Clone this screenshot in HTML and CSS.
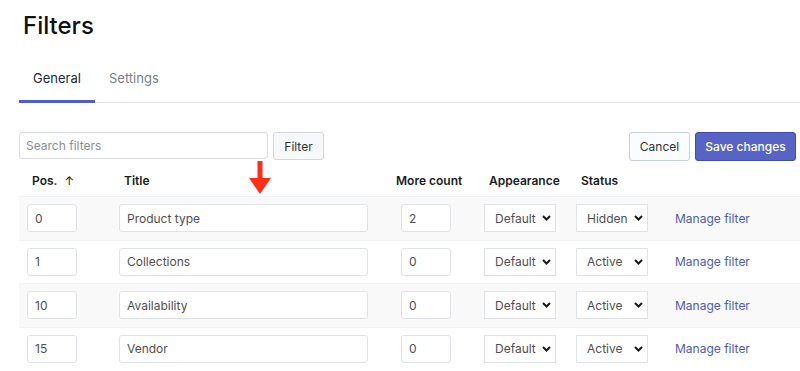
FILE: index.html
```html
<!DOCTYPE html>
<html lang="en">
<head>
    <meta charset="UTF-8">
    <meta name="viewport" content="width=device-width, initial-scale=1.0">
    <title>Filters</title>
    <link rel="stylesheet" href="styles.css">
</head>
<body>
    <div class="page">
        <h1>Filters</h1>

        <div class="tabs">
            <div class="tab active">General</div>
            <div class="tab">Settings</div>
        </div>

        <div class="toolbar">
            <div class="search">
                <input type="text" class="search-input" placeholder="Search filters">
                <button class="btn btn-filter">Filter</button>
            </div>
            <div class="actions">
                <button class="btn btn-cancel">Cancel</button>
                <button class="btn btn-primary">Save changes</button>
            </div>
        </div>

        <div class="table">
            <div class="head">
                <div class="th">Pos. <span class="sort">&uarr;</span></div>
                <div class="th">Title</div>
                <div class="th th-count">More count</div>
                <div class="th">Appearance</div>
                <div class="th">Status</div>
                <div></div>
                <!-- red pointer over the title column -->
                <svg class="pointer" width="22" height="34" viewBox="0 0 22 34">
                    <rect x="8.5" y="0" width="5" height="19" fill="#ff3014"/>
                    <polygon points="0,17 22,17 11,33" fill="#ff3014"/>
                </svg>
            </div>

            <div class="row">
                <input class="field pos" value="0">
                <input class="field title" value="Product type">
                <input class="field count" value="2">
                <div class="select-wrap"><select class="select"><option>Default</option></select><svg class="chev" width="9" height="6" viewBox="0 0 9 6"><path d="M1 1 L4.5 4.5 L8 1" fill="none" stroke="#1a1a1a" stroke-width="2"/></svg></div>
                <div class="select-wrap"><select class="select"><option>Hidden</option></select><svg class="chev" width="9" height="6" viewBox="0 0 9 6"><path d="M1 1 L4.5 4.5 L8 1" fill="none" stroke="#1a1a1a" stroke-width="2"/></svg></div>
                <a href="#" class="manage">Manage filter</a>
            </div>
            <div class="row">
                <input class="field pos" value="1">
                <input class="field title" value="Collections">
                <input class="field count" value="0">
                <div class="select-wrap"><select class="select"><option>Default</option></select><svg class="chev" width="9" height="6" viewBox="0 0 9 6"><path d="M1 1 L4.5 4.5 L8 1" fill="none" stroke="#1a1a1a" stroke-width="2"/></svg></div>
                <div class="select-wrap"><select class="select"><option>Active</option></select><svg class="chev" width="9" height="6" viewBox="0 0 9 6"><path d="M1 1 L4.5 4.5 L8 1" fill="none" stroke="#1a1a1a" stroke-width="2"/></svg></div>
                <a href="#" class="manage">Manage filter</a>
            </div>
            <div class="row">
                <input class="field pos" value="10">
                <input class="field title" value="Availability">
                <input class="field count" value="0">
                <div class="select-wrap"><select class="select"><option>Default</option></select><svg class="chev" width="9" height="6" viewBox="0 0 9 6"><path d="M1 1 L4.5 4.5 L8 1" fill="none" stroke="#1a1a1a" stroke-width="2"/></svg></div>
                <div class="select-wrap"><select class="select"><option>Active</option></select><svg class="chev" width="9" height="6" viewBox="0 0 9 6"><path d="M1 1 L4.5 4.5 L8 1" fill="none" stroke="#1a1a1a" stroke-width="2"/></svg></div>
                <a href="#" class="manage">Manage filter</a>
            </div>
            <div class="row">
                <input class="field pos" value="15">
                <input class="field title" value="Vendor">
                <input class="field count" value="0">
                <div class="select-wrap"><select class="select"><option>Default</option></select><svg class="chev" width="9" height="6" viewBox="0 0 9 6"><path d="M1 1 L4.5 4.5 L8 1" fill="none" stroke="#1a1a1a" stroke-width="2"/></svg></div>
                <div class="select-wrap"><select class="select"><option>Active</option></select><svg class="chev" width="9" height="6" viewBox="0 0 9 6"><path d="M1 1 L4.5 4.5 L8 1" fill="none" stroke="#1a1a1a" stroke-width="2"/></svg></div>
                <a href="#" class="manage">Manage filter</a>
            </div>
        </div>
    </div>
</body>
</html>
```

FILE: styles.css
```css
body {
    margin: 0;
    font-family: 'Inter', 'Liberation Sans', sans-serif;
    color: #212b36;
    background-color: #ffffff;
    overflow: hidden;
}
.page {
    padding-left: 19px;
}
h1 {
    margin: 10px 0 0 4px;
    font-size: 24px;
    line-height: 32px;
    font-weight: 500;
    color: #111;
}
.tabs {
    display: flex;
    margin-top: 26px;
    border-bottom: 1px solid #e3e5e8;
}
.tab {
    padding: 0 14px 12px 14px;
    font-size: 13px;
    line-height: 20px;
    color: #7a7f85;
    border-bottom: 3px solid transparent;
    margin-bottom: -1px;
}
.tab.active {
    color: #212b36;
    border-bottom-color: #4f5ecb;
    width: 48px;
}
.toolbar {
    display: flex;
    justify-content: space-between;
    align-items: flex-start;
    margin-top: 29px;
    padding-right: 4px;
}
.search {
    display: flex;
    gap: 5px;
}
.search-input {
    width: 249px;
    height: 27px;
    box-sizing: border-box;
    border: 1px solid #dadee3;
    border-radius: 3px;
    padding: 0 6px;
    font-family: inherit;
    font-size: 12px;
    color: #333;
}
.search-input::placeholder {
    color: #8a8f96;
}
.btn {
    height: 28px;
    padding: 0;
    border: 1px solid #d3d8de;
    border-radius: 3px;
    background-color: #f7f8fa;
    font-family: inherit;
    font-size: 12px;
    color: #333;
}
.btn-filter {
    width: 51px;
}
.actions {
    display: flex;
    gap: 5px;
}
.btn-cancel {
    height: 29px;
    width: 61px;
    background-color: #fbfcfd;
    border-color: #c9d0d8;
}
.btn-primary {
    height: 29px;
    width: 101px;
    background-color: #5764c6;
    border-color: #3f4db0;
    color: #ffffff;
    font-weight: 500;
}
.head, .row {
    display: grid;
    grid-template-columns: 92px 282px 83px 92px 99px 1fr;
    align-items: center;
    justify-items: start;
    padding-left: 8px;
}
.head {
    position: relative;
    margin-top: 10px;
    padding-bottom: 5px;
}
.th {
    padding-left: 5px;
    font-size: 12px;
    line-height: 20px;
    font-weight: 600;
    color: #1c1c1c;
    white-space: nowrap;
}
.th-count {
    margin-left: -10px;
}
.sort {
    margin-left: 4px;
    font-weight: 400;
}
.pointer {
    position: absolute;
    left: 230px;
    top: -10px;
}
.row {
    height: 43.5px;
    box-sizing: border-box;
    border-top: 1px solid #f1f2f4;
}
.row:nth-child(even) {
    background-color: #f9f9fa;
}
.field {
    height: 28px;
    box-sizing: border-box;
    border: 1px solid #dfe3e8;
    border-radius: 3px;
    padding: 0 7px;
    font-family: inherit;
    font-size: 12px;
    color: #505050;
    background-color: #ffffff;
}
.field.pos,
.field.count {
    width: 50px;
}
.field.title {
    width: 249px;
}
.select-wrap {
    position: relative;
    width: 72px;
}
.select {
    appearance: none;
    -webkit-appearance: none;
    width: 72px;
    height: 28px;
    box-sizing: border-box;
    border: 1px solid #dfe3e8;
    border-radius: 0;
    padding: 0 0 0 10px;
    font-family: inherit;
    font-size: 12px;
    color: #505050;
    background-color: #ffffff;
}
.chev {
    position: absolute;
    right: 5px;
    top: 11px;
    pointer-events: none;
}
.manage {
    font-size: 12px;
    color: #4d5bbf;
    text-decoration: none;
    white-space: nowrap;
}
```
